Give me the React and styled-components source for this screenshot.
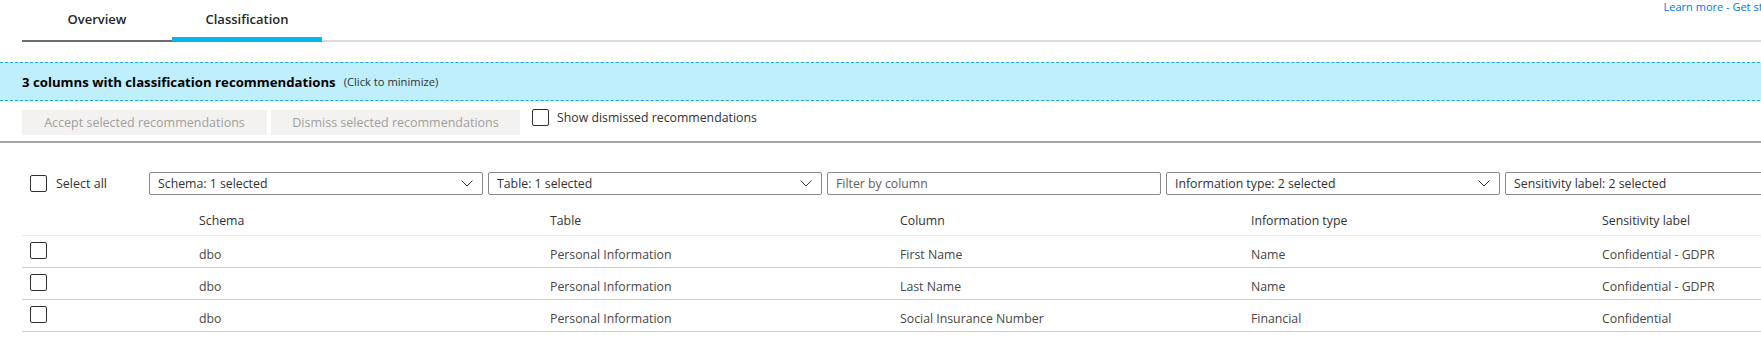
import React from "react";
import styled, { createGlobalStyle } from "styled-components";

const GlobalStyle = createGlobalStyle`
  body {
    margin: 0;
    overflow: hidden;
    background: #ffffff;
  }
`;

const filters = [
  { label: "Schema: 1 selected", select: true },
  { label: "Table: 1 selected", select: true },
  { label: "Filter by column", select: false },
  { label: "Information type: 2 selected", select: true },
  { label: "Sensitivity label: 2 selected", select: true },
];

const columns = ["Schema", "Table", "Column", "Information type", "Sensitivity label"];

const rows = [
  ["dbo", "Personal Information", "First Name", "Name", "Confidential - GDPR"],
  ["dbo", "Personal Information", "Last Name", "Name", "Confidential - GDPR"],
  ["dbo", "Personal Information", "Social Insurance Number", "Financial", "Confidential"],
];

function Chevron() {
  return (
    <svg width="12" height="7" viewBox="0 0 12 7">
      <polyline points="0.5,0.5 6,6 11.5,0.5" fill="none" stroke="#323130" strokeWidth="1" />
    </svg>
  );
}

export default function App() {
  return (
    <Page>
      <GlobalStyle />
      <TopBar>
        <Tab>Overview</Tab>
        <Tab active>Classification</Tab>
        <TabRest>
          <HelpLink>Learn more - Get started</HelpLink>
        </TabRest>
      </TopBar>

      <Banner>
        <BannerTitle>3 columns with classification recommendations</BannerTitle>
        <BannerHint>(Click to minimize)</BannerHint>
      </Banner>

      <ActionRow>
        <ActionButton $w={245}>Accept selected recommendations</ActionButton>
        <ActionButton $w={249}>Dismiss selected recommendations</ActionButton>
        <CheckLabel>
          <Box />
          Show dismissed recommendations
        </CheckLabel>
      </ActionRow>

      <Divider />

      <FilterRow>
        <SelectAll>
          <Box />
          Select all
        </SelectAll>
        {filters.map((f) => (
          <Dropdown key={f.label} $placeholder={!f.select}>
            <span>{f.label}</span>
            {f.select && <Chevron />}
          </Dropdown>
        ))}
      </FilterRow>

      <Table>
        <HeadRow>
          <Cell />
          {columns.map((c) => (
            <HeadCell key={c}>{c}</HeadCell>
          ))}
          <Cell />
        </HeadRow>
        {rows.map((r, i) => (
          <DataRow key={i}>
            <Cell>
              <Box />
            </Cell>
            {r.map((v, j) => (
              <TextCell key={j}>{v}</TextCell>
            ))}
            <Cell />
          </DataRow>
        ))}
      </Table>
    </Page>
  );
}

const Page = styled.div`
  width: 1800px;
  font-family: "Open Sans", "Noto Sans", sans-serif;
  color: #323130;
`;

const TopBar = styled.div`
  display: flex;
  height: 42px;
  padding-left: 22px;
`;

const Tab = styled.div`
  width: 150px;
  box-sizing: border-box;
  padding-top: 10px;
  line-height: 18px;
  text-align: center;
  font-size: 13px;
  font-weight: 600;
  color: #262626;
  border-bottom: ${(p) => (p.active ? "5px solid #00b7f1" : "2px solid #6d6d6d")};
`;

const TabRest = styled.div`
  flex: 1;
  display: flex;
  justify-content: flex-end;
  align-items: flex-start;
  border-bottom: 2px solid #dbdbdb;
  padding-right: 10px;
`;

const HelpLink = styled.a`
  font-size: 11px;
  line-height: 14px;
  color: #0078d4;
  white-space: nowrap;
`;

const Banner = styled.div`
  margin-top: 20px;
  height: 39px;
  box-sizing: border-box;
  display: flex;
  align-items: center;
  gap: 8px;
  padding-left: 22px;
  background: #bfeefc;
  border-top: 1px dashed #1ba7df;
  border-bottom: 1px dashed #1ba7df;
`;

const BannerTitle = styled.span`
  font-size: 13.2px;
  font-weight: 700;
  color: #000;
`;

const BannerHint = styled.span`
  font-size: 11.2px;
  color: #323130;
`;

const ActionRow = styled.div`
  display: flex;
  align-items: flex-start;
  gap: 4px;
  height: 40px;
  box-sizing: border-box;
  padding: 9px 0 0 22px;
`;

const ActionButton = styled.button`
  width: ${(p) => p.$w}px;
  height: 25px;
  border: none;
  padding: 0;
  background: #f3f2f1;
  color: #a19f9d;
  font-family: inherit;
  font-size: 12.5px;
`;

const Box = styled.span`
  display: inline-block;
  flex: none;
  width: 17px;
  height: 17px;
  box-sizing: border-box;
  border: 1px solid #323130;
  border-radius: 2px;
  background: #fff;
`;

const CheckLabel = styled.label`
  display: flex;
  align-items: center;
  gap: 8px;
  margin-left: 8px;
  margin-top: -1px;
  font-size: 12.3px;
  color: #323130;
  white-space: nowrap;
`;

const Divider = styled.div`
  height: 2px;
  background: #a6a6a6;
`;

const FilterRow = styled.div`
  display: flex;
  align-items: center;
  gap: 5px;
  margin-top: 29px;
  padding-left: 30px;
`;

const SelectAll = styled.label`
  flex: none;
  display: flex;
  align-items: center;
  gap: 9px;
  width: 114px;
  font-size: 12.5px;
  color: #323130;
  white-space: nowrap;
`;

const Dropdown = styled.div`
  flex: none;
  width: 334px;
  height: 23px;
  box-sizing: border-box;
  display: flex;
  align-items: center;
  justify-content: space-between;
  padding: 0 9px 0 8px;
  border: 1px solid #8a8886;
  border-radius: 2px;
  font-size: 12.3px;
  color: ${(p) => (p.$placeholder ? "#605e5c" : "#323130")};
  white-space: nowrap;
`;

const Table = styled.div`
  margin-top: 8px;
  padding-left: 22px;
`;

const rowGrid = `
  display: grid;
  grid-template-columns: 177px 351px 350px 351px 351px 1fr;
  align-items: center;
`;

const HeadRow = styled.div`
  ${rowGrid}
  height: 33px;
  box-sizing: border-box;
  padding-top: 7px;
  border-bottom: 1px solid #ebebeb;
`;

const DataRow = styled.div`
  ${rowGrid}
  height: 32px;
  box-sizing: border-box;
  border-bottom: 1px solid #cfcfcf;
`;

const Cell = styled.div`
  display: flex;
  align-items: center;
  padding-left: 8px;
  font-size: 12.3px;
  color: #484644;
  white-space: nowrap;
  &:not(:first-child) {
    padding-left: 0;
  }
`;

const TextCell = styled(Cell)`
  padding-top: 8px;
`;

const HeadCell = styled(Cell)`
  color: #323130;
  font-weight: 500;
`;
